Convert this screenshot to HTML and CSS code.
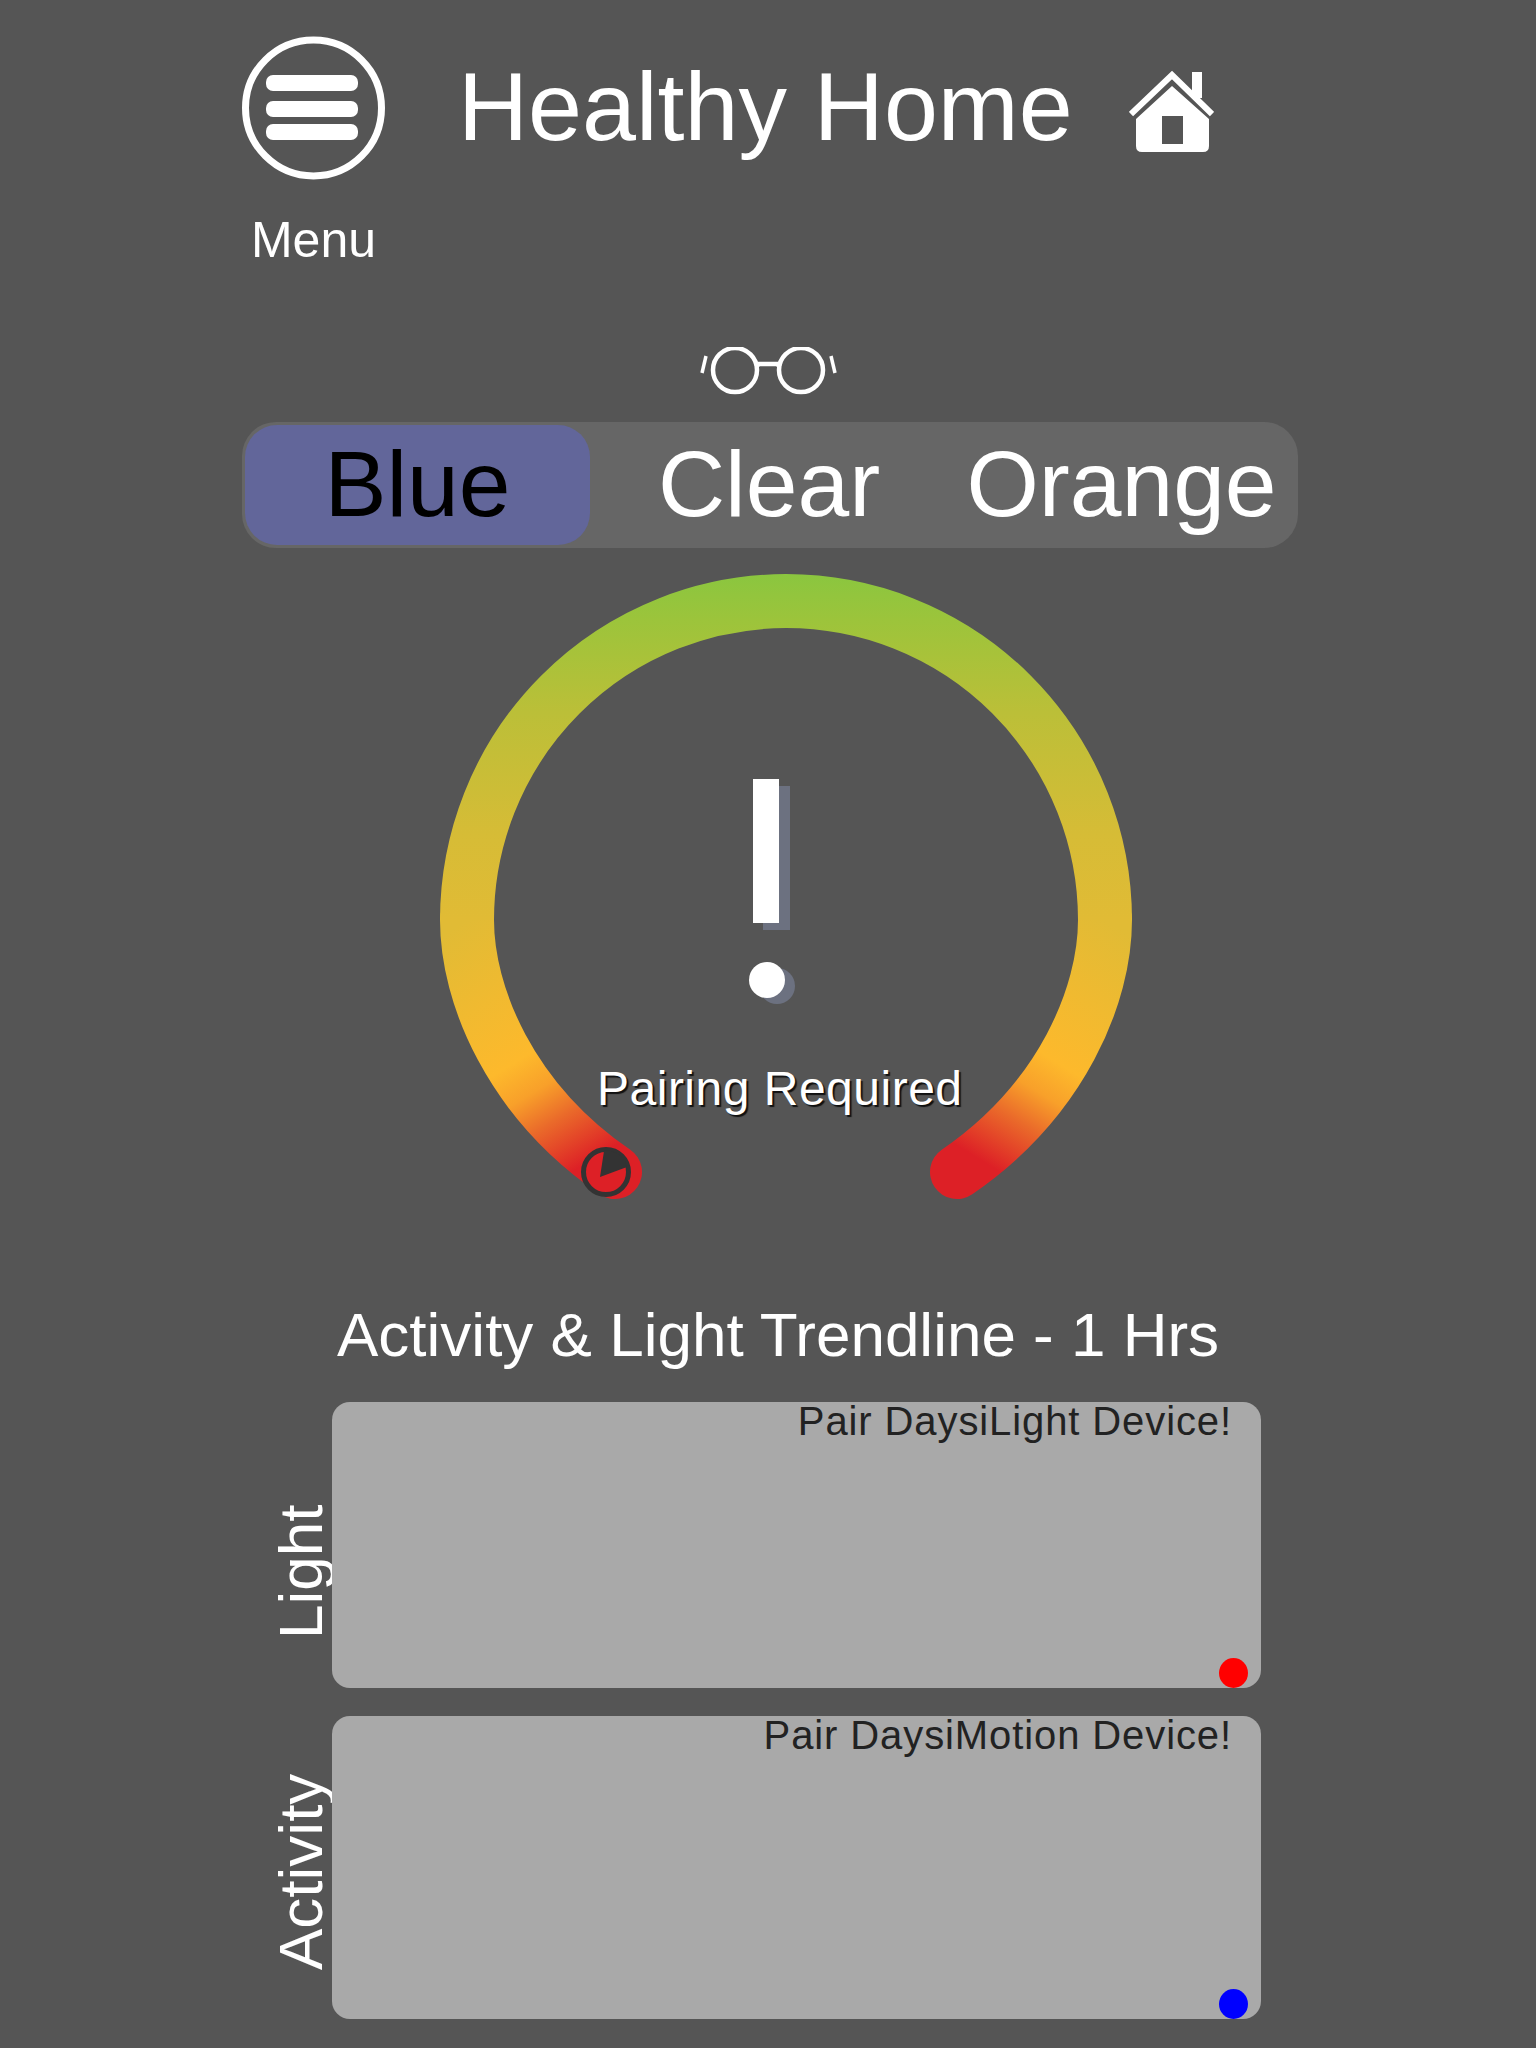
FILE: index.html
```html
<!doctype html>
<html lang="en">
<head>
    <meta charset="utf-8"/>
    <title>Healthy Home</title>
    <link rel="stylesheet" href="styles.css">
</head>

<body>
    <div class="page">
        <!--header-->
        <div class="header">
            <div class="menu">
                <svg class="menu-icon" viewBox="0 0 143 144">
                    <circle cx="71.5" cy="72" r="68" fill="none" stroke="#fff" stroke-width="7"/>
                    <rect x="24" y="39" width="92" height="16" rx="7" fill="#fff"/>
                    <rect x="24" y="65" width="92" height="16" rx="7" fill="#fff"/>
                    <rect x="24" y="88" width="92" height="16" rx="7" fill="#fff"/>
                </svg>
                <span class="menu-label">Menu</span>
            </div>
            <h1 class="title">Healthy Home</h1>
            <svg class="home-icon" viewBox="0 0 85 82">
                <rect x="63" y="2" width="10" height="26" fill="#fff"/>
                <path d="M2 44 L43 5 L83 44" fill="none" stroke="#fff" stroke-width="6"/>
                <path fill-rule="evenodd" d="M43 16 L80 49 L80 76 Q80 82 74 82 L13 82 Q7 82 7 76 L7 49 Z M33 46 L33 74 L54 74 L54 46 Z" fill="#fff"/>
            </svg>
        </div>

        <!--glasses and lens picker-->
        <svg class="glasses" viewBox="0 0 140 48">
            <g fill="none" stroke="#fff" stroke-width="4.5">
                <circle cx="36" cy="23" r="22"/>
                <circle cx="102" cy="23" r="22"/>
                <path d="M57 20 L60 17 L78 17 L81 20"/>
                <path d="M7 9 L3 26" stroke-width="3.5"/>
                <path d="M132 9 L136 26" stroke-width="3.5"/>
            </g>
        </svg>
        <div class="picker">
            <div class="picker-item current">Blue</div>
            <div class="picker-item">Clear</div>
            <div class="picker-item">Orange</div>
        </div>

        <!--gauge-->
        <div class="gauge">
            <svg class="gauge-ring" viewBox="426 560 720 660">
                <defs>
                    <linearGradient id="ringMain" gradientUnits="userSpaceOnUse" x1="0" y1="573" x2="0" y2="920">
                        <stop offset="0" stop-color="#8ac63f"/>
                        <stop offset="0.135" stop-color="#9cc43b"/>
                        <stop offset="0.4" stop-color="#bbbf38"/>
                        <stop offset="0.75" stop-color="#d6bc36"/>
                        <stop offset="1" stop-color="#e1bb35"/>
                    </linearGradient>
                    <linearGradient id="tailLeft" gradientUnits="userSpaceOnUse" x1="467" y1="920" x2="620" y2="1170">
                        <stop offset="0" stop-color="#e1bb35"/>
                        <stop offset="0.5" stop-color="#fdb92c"/>
                        <stop offset="0.62" stop-color="#f8a02a"/>
                        <stop offset="0.74" stop-color="#ea6a2a"/>
                        <stop offset="0.92" stop-color="#dd2026"/>
                    </linearGradient>
                    <linearGradient id="tailRight" gradientUnits="userSpaceOnUse" x1="1105" y1="920" x2="952" y2="1170">
                        <stop offset="0" stop-color="#e1bb35"/>
                        <stop offset="0.5" stop-color="#fdb92c"/>
                        <stop offset="0.62" stop-color="#f8a02a"/>
                        <stop offset="0.74" stop-color="#ea6a2a"/>
                        <stop offset="0.92" stop-color="#dd2026"/>
                    </linearGradient>
                </defs>
                <path d="M467 919 L467 920 C467 995 510 1100 615 1172" fill="none" stroke="url(#tailLeft)" stroke-width="54" stroke-linecap="round"/>
                <path d="M1105 919 L1105 920 C1105 995 1062 1100 957 1172" fill="none" stroke="url(#tailRight)" stroke-width="54" stroke-linecap="round"/>
                <path d="M467 920 A319 319 0 0 1 1105 920" fill="none" stroke="url(#ringMain)" stroke-width="54"/>

                <!--clock on the left end-->
                <circle cx="606" cy="1172" r="22.5" fill="none" stroke="#333" stroke-width="5"/>
                <path d="M600 1177 L604 1151 A21 21 0 0 1 627 1167 Z" fill="#333"/>

                <!--exclamation mark-->
                <rect x="763" y="786" width="27" height="144" fill="#6c7180"/>
                <circle cx="777" cy="986" r="18" fill="#6c7180"/>
                <rect x="753" y="779" width="26" height="144" fill="#fff"/>
                <circle cx="767" cy="980" r="18" fill="#fff"/>
            </svg>
            <span class="gauge-text">Pairing Required</span>
        </div>

        <!--trendlines-->
        <h2 class="trend-title">Activity &amp; Light Trendline - 1 Hrs</h2>
        <div class="trend-row">
            <span class="trend-label">Light</span>
            <div class="trend-card">
                <span class="trend-msg">Pair DaysiLight Device!</span>
                <span class="trend-dot red"></span>
            </div>
        </div>
        <div class="trend-row row-activity">
            <span class="trend-label">Activity</span>
            <div class="trend-card">
                <span class="trend-msg">Pair DaysiMotion Device!</span>
                <span class="trend-dot blue"></span>
            </div>
        </div>
    </div>
</body>
</html>
```

FILE: styles.css
```css
* {
    padding: 0;
    margin: 0;
    box-sizing: border-box;
}

body {
    background: #555;
    color: #fff;
    font-family: "Liberation Sans", Arial, sans-serif;
}

.page {
    width: 1536px;
    height: 2048px;
    overflow: hidden;
    padding-top: 36px;
}

.header {
    display: flex;
    align-items: flex-start;
    margin-left: 242px;
    height: 309px;
}

.menu {
    width: 143px;
    display: flex;
    flex-direction: column;
    align-items: center;
}

.menu-icon {
    width: 143px;
    height: 144px;
}

.menu-label {
    font-size: 50px;
    line-height: 58px;
    margin-top: 31px;
}

.title {
    font-size: 97px;
    font-weight: normal;
    line-height: 110px;
    margin-left: 73px;
    margin-top: 16px;
    white-space: nowrap;
}

.home-icon {
    width: 85px;
    height: 82px;
    margin-left: 56px;
    margin-top: 34px;
}

.glasses {
    display: block;
    width: 140px;
    height: 48px;
    margin-left: 699px;
    margin-top: 2px;
}

.picker {
    display: grid;
    grid-template-columns: 345px 358px 347px;
    width: 1056px;
    height: 126px;
    margin-left: 242px;
    margin-top: 27px;
    padding: 3px 3px;
    background: #666;
    border-radius: 34px;
}

.picker-item {
    text-align: center;
    font-size: 93px;
    line-height: 118px;
    border-radius: 32px;
    white-space: nowrap;
}

.picker-item.current {
    background: #62669a;
    color: #000;
}

.gauge {
    position: relative;
    width: 720px;
    height: 660px;
    margin-left: 426px;
    margin-top: 12px;
}

.gauge-ring {
    display: block;
    width: 720px;
    height: 660px;
}

.gauge-text {
    position: absolute;
    left: 171px;
    top: 501px;
    font-size: 48px;
    line-height: 56px;
    letter-spacing: 0.5px;
    white-space: nowrap;
    text-shadow: 2px 2px 1px #111;
}

.trend-title {
    font-size: 62px;
    font-weight: normal;
    line-height: 72px;
    margin-left: 337px;
    margin-top: 79px;
    white-space: nowrap;
}

.trend-row {
    display: flex;
    height: 286px;
    margin-left: 270px;
    margin-top: 31px;
}

.row-activity {
    height: 303px;
    margin-top: 28px;
}

.trend-label {
    writing-mode: vertical-rl;
    transform: rotate(180deg);
    width: 62px;
    font-size: 62px;
    line-height: 62px;
    margin-bottom: 49px;
    white-space: nowrap;
}

.trend-card {
    position: relative;
    width: 929px;
    background: #a9a9a9;
    border-radius: 18px;
    padding-right: 29px;
    text-align: right;
}

.trend-msg {
    display: block;
    font-size: 40px;
    line-height: 38px;
    letter-spacing: 0.9px;
    color: #222;
}

.trend-dot {
    position: absolute;
    right: 13px;
    bottom: 0;
    width: 29px;
    height: 30px;
    border-radius: 50%;
}

.trend-dot.red {
    background: #f00;
}

.trend-dot.blue {
    background: #00f;
}
```
